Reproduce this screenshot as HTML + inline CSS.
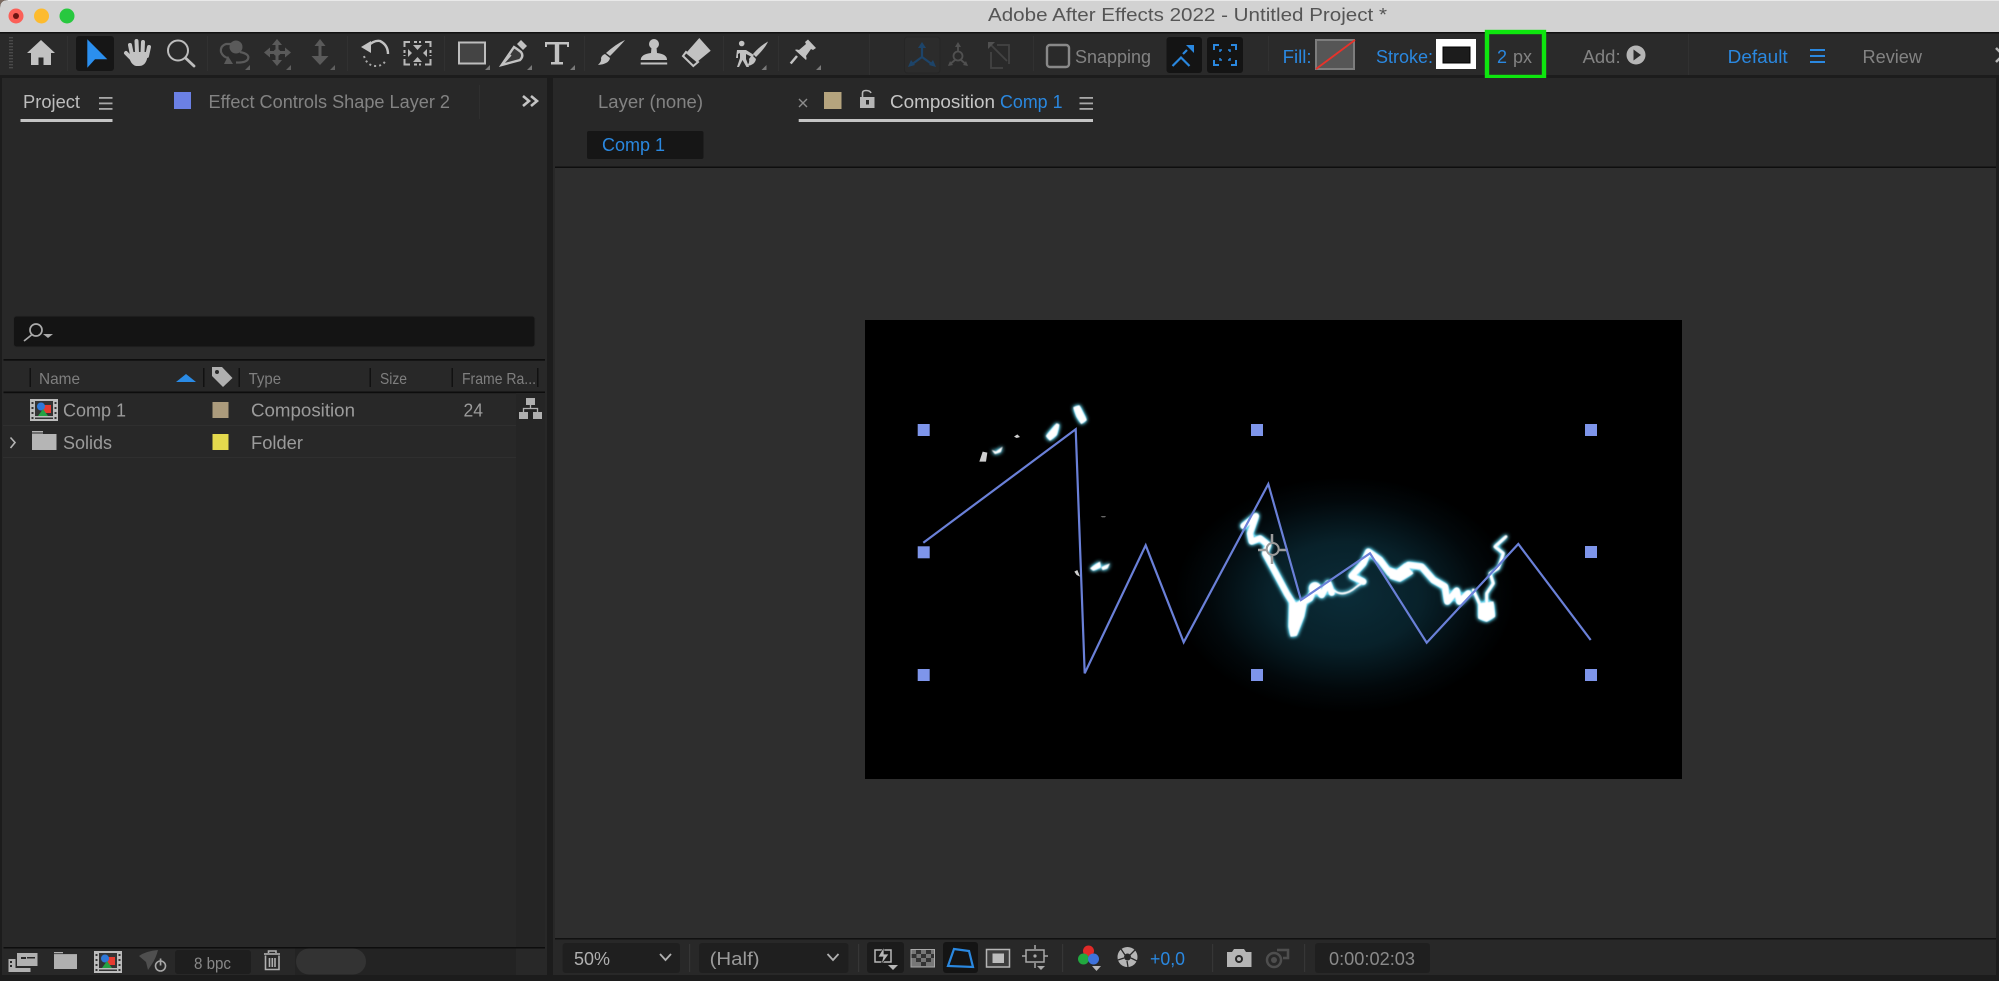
<!DOCTYPE html>
<html><head><meta charset="utf-8"><title>Adobe After Effects 2022 - Untitled Project *</title>
<style>
html,body{margin:0;padding:0;background:#1c1c1c;width:1999px;height:981px;overflow:hidden}
svg{display:block;filter:blur(.35px)}
text{font-family:"Liberation Sans",sans-serif;font-size:18.5px}
.g{fill:#838383}.l{fill:#bdbdbd}.b{fill:#2a88e0}.r{fill:#9b9b9b}.h{fill:#7f7f7f;font-size:16px}
</style></head><body>
<svg width="1999" height="981" viewBox="0 0 1999 981" xmlns="http://www.w3.org/2000/svg">
<defs>
<filter id="glow" x="-30%" y="-30%" width="160%" height="160%">
<feGaussianBlur in="SourceGraphic" stdDeviation="1.500" result="w"/>
<feGaussianBlur in="SourceAlpha" stdDeviation="6"/>
<feComponentTransfer result="a"><feFuncA type="linear" slope="2.2"/></feComponentTransfer>
<feFlood flood-color="#5fd3ec"/><feComposite in2="a" operator="in" result="c"/>
<feMerge><feMergeNode in="c"/><feMergeNode in="w"/></feMerge>
</filter>
<radialGradient id="halo"><stop offset="0" stop-color="#0b2c38"/><stop offset=".45" stop-color="#08212a"/><stop offset=".8" stop-color="#02080b"/><stop offset="1" stop-color="#000"/></radialGradient>
<g id="compicon">
<rect width="28" height="22" fill="#bcbcbc"/><rect x="5" y="2" width="18" height="18" fill="#333"/>
<g fill="#333"><rect x="1.500" y="3" width="2" height="2"/><rect x="1.500" y="8" width="2" height="2"/><rect x="1.500" y="13" width="2" height="2"/><rect x="1.500" y="18" width="2" height="2"/><rect x="24.500" y="3" width="2" height="2"/><rect x="24.500" y="8" width="2" height="2"/><rect x="24.500" y="13" width="2" height="2"/><rect x="24.500" y="18" width="2" height="2"/></g>
<rect x="13" y="6" width="8" height="8" fill="#e63a2f"/><circle cx="11" cy="7.500" r="4" fill="#2f78d8"/><path d="M8 17l5-7 5 7z" fill="#25a244"/><rect x="5" y="17" width="18" height="1.500" fill="#bcbcbc"/>
</g>
</defs>

<rect width="1999" height="981" fill="#1c1c1c"/>
<!-- title bar -->
<path d="M0 32V8Q0 0 8 0H1999V32Z" fill="#d2d2d2"/><rect x="8" y="0" width="1991" height="1" fill="#e9e9e9"/>
<path d="M0 0H8Q0 0 0 8Z" fill="#7a6a60"/>
<rect y="32" width="1999" height="1.500" fill="#111"/>
<circle cx="16" cy="16" r="7.500" fill="#fb5f57"/><circle cx="16" cy="16" r="3" fill="#6b1512"/>
<circle cx="41.500" cy="16" r="7.500" fill="#fdbb2e"/><circle cx="67" cy="16" r="7.500" fill="#28c83f"/>
<text x="988" y="21" style="fill:#555" textLength="399" lengthAdjust="spacingAndGlyphs">Adobe After Effects 2022 - Untitled Project *</text>

<!-- toolbar -->
<rect y="33.500" width="1999" height="41.500" fill="#2a2a2a"/>
<g fill="#4a4a4a"><rect x="9" y="37" width="4" height="1.400"/><rect x="9" y="40" width="4" height="1.400"/><rect x="9" y="43" width="4" height="1.400"/><rect x="9" y="46" width="4" height="1.400"/><rect x="9" y="49" width="4" height="1.400"/><rect x="9" y="52" width="4" height="1.400"/><rect x="9" y="55" width="4" height="1.400"/><rect x="9" y="58" width="4" height="1.400"/><rect x="9" y="61" width="4" height="1.400"/><rect x="9" y="64" width="4" height="1.400"/><rect x="9" y="67" width="4" height="1.400"/></g>
<g fill="#313131"><rect x="67" y="36" width="1" height="35"/><rect x="207" y="36" width="1" height="35"/><rect x="347" y="36" width="1" height="35"/><rect x="444" y="36" width="1" height="35"/><rect x="584" y="36" width="1" height="35"/><rect x="723" y="36" width="1" height="35"/><rect x="778" y="36" width="1" height="35"/><rect x="869" y="34" width="1" height="41"/><rect x="1033" y="36" width="1" height="35"/><rect x="1268" y="36" width="1" height="35"/><rect x="1688" y="34" width="1" height="41"/></g>

<path d="M41 40L27 53h4v12h7.500v-7.500h5V65H51V53h4z" fill="#c2c2c2"/>
<rect x="76" y="36" width="38" height="35" rx="3" fill="#161616"/>
<path d="M87.300 39.300L107.300 59.300H95L87.300 67.700z" fill="#2b8fef"/>
<!-- hand -->
<g stroke="#c2c2c2" stroke-width="4" stroke-linecap="round" fill="none"><path d="M132 55L130 45"/><path d="M137 53L136.500 41"/><path d="M142.500 53L143 42"/><path d="M147 56L149 47"/><path d="M133 60L126 53"/></g>
<path d="M130 52H148L147 59Q145 66 139 66H136Q132 65 130 60z" fill="#c2c2c2"/>
<!-- zoom -->
<circle cx="178" cy="50.500" r="10" fill="none" stroke="#bdbdbd" stroke-width="2"/><path d="M185.500 58L194 66" stroke="#bdbdbd" stroke-width="2.800" stroke-linecap="round"/>
<!-- rotate dim -->
<circle cx="236" cy="47" r="6.500" fill="#5a5a5a"/><path d="M232 44H226Q220 46 221 52Q223 57 228 58M240 52Q250 54 248 59Q246 63 236 62.500" fill="none" stroke="#5a5a5a" stroke-width="2.200"/><path d="M224 64L233 64L228 56z" fill="#5a5a5a"/>
<!-- move dim -->
<g fill="#5a5a5a"><path d="M277 39l-5 6h10zM277 66l-5-6h10zM264 52.500l6-5v10zM291 52.500l-6-5v10z"/><rect x="275.500" y="44" width="3" height="17"/><rect x="269" y="51" width="17" height="3"/><circle cx="277" cy="52.500" r="3.500"/></g>
<!-- vertical arrow dim -->
<g fill="#5a5a5a"><path d="M320 39l-5.500 7h11z"/><path d="M320 65l-8.500-9h17z"/><rect x="318.500" y="44" width="3" height="14"/></g>
<g fill="#5f5f5f"><path d="M250 65v5h-5zM291 65v5h-5zM335 65v5h-5z"/></g>
<!-- rotate -->
<path d="M368 46Q374 40 380 41Q388 45 388 54" fill="none" stroke="#c2c2c2" stroke-width="2.400"/><path d="M361 47L371 41L371 53z" fill="#c2c2c2"/>
<path d="M364 56Q367 66 376 66Q383 66 386 60" fill="none" stroke="#a8a8a8" stroke-width="2" stroke-dasharray="2 3"/>
<!-- unified camera -->
<g fill="none" stroke="#b8b8b8" stroke-width="2"><path d="M404.500 47V42H410M425 42H430.500V47M430.500 59V64.500H425M410 64.500H404.500V59"/><path d="M414 42H421M414 64.500H421M404.500 50V56M430.500 50V56" stroke-dasharray="3 2"/></g>
<g fill="#b8b8b8"><path d="M413 45h9l-4.500 5zM413 62h9l-4.500-5zM408 49v8l4-4zM427 49v8l-4-4z"/></g>
<!-- rect -->
<rect x="459" y="42.500" width="26" height="21" fill="#444" stroke="#bdbdbd" stroke-width="2"/>
<!-- pen -->
<path d="M514 47L501.700 65L520 60Q524 56 521 52L517 49z" fill="#3a3a3a" stroke="#c2c2c2" stroke-width="2.400"/><path d="M517 44L521 40L527 46L523 50z" fill="#c2c2c2"/><path d="M503 64L511 55" stroke="#c2c2c2" stroke-width="1.500"/>
<!-- T -->
<path d="M545 42V47H547V44.500H554.800V62H551V64.500H563V62H559.200V44.500H567V47H569V42z" fill="#c2c2c2"/>
<!-- corner tris -->
<g fill="#7a7a7a"><path d="M490 65v5h-5zM532 65v5h-5zM575 65v5h-5zM766.500 65v5h-5zM821 65v5h-5z"/></g>
<!-- brush -->
<path d="M625 40Q622 44 610 56L606 53Q616 44 625 40z" fill="#c2c2c2"/><path d="M605 54L610 58Q609 64 598 65Q602 61 601 58Q602 55 605 54z" fill="#c2c2c2"/>
<!-- stamp -->
<circle cx="654" cy="44" r="5" fill="#c2c2c2"/><path d="M651.500 47h5L657 53Q667 54 667 60H640.700Q641 54 651 53z" fill="#c2c2c2"/><rect x="640.700" y="62.500" width="26.500" height="2" fill="#c2c2c2"/>
<!-- eraser -->
<path d="M699.300 38L710.700 50.700L697 62L687 52z" fill="#c2c2c2"/><path d="M686 52L683 56L693.300 66L698 62z" fill="#2a2a2a" stroke="#c2c2c2" stroke-width="2"/>
<!-- puppet -->
<circle cx="741.700" cy="43.500" r="2.800" fill="#c2c2c2"/><path d="M737 50H746L754 55L752 57L746 54V59L749 67H746.500L742.500 60L739 67H737L740 58V53L738 54V58H736z" fill="#c2c2c2"/>
<path d="M768 41.500Q766 47 756 57L753 54Q760 46 768 41.500z" fill="#c2c2c2"/><path d="M752 55L756 59Q755 65 747 66Q750 62 749 59z" fill="#c2c2c2"/>
<!-- pin -->
<path d="M808 39.500L816 48L813 50L811 49L806 56Q807 59 806 60L795 50Q796 49 799 50L806 44L805 42z" fill="#c2c2c2"/><path d="M797 56L790.700 63.500" stroke="#c2c2c2" stroke-width="2.500"/>

<!-- axis -->
<rect x="904.500" y="37" width="35.500" height="36" rx="3" fill="#2c2c2c" stroke="#262626"/>
<g stroke="#1d4469" stroke-width="2.200" fill="none"><path d="M922 46V57L911 65M922 57L933 65"/></g>
<g fill="#1d4469"><path d="M922 42l-4 6h8zM908 67l3-7 4 5zM936 67l-3-7-4 5z"/></g>
<g stroke="#505050" stroke-width="1.800" fill="none"><circle cx="958" cy="56" r="4.500"/><path d="M958 47V52M955 60L949 65M961 60L967 65"/></g><g fill="#505050"><path d="M958 42l-3 5h6zM948 66l2-5 3 4zM968 66l-2-5-3 4z"/></g>
<g stroke="#434343" stroke-width="1.800" fill="none"><path d="M991 45L1007 61M991 52V68H1003M1009 64V45H997"/></g><path d="M988 42h7l-7 7z" fill="#505050"/>
<!-- snapping -->
<rect x="1047" y="45" width="22" height="22" rx="3" fill="#2a2a2a" stroke="#898989" stroke-width="2.400"/>
<text x="1075" y="63" class="g" textLength="76" lengthAdjust="spacingAndGlyphs">Snapping</text>
<rect x="1166.500" y="37" width="35.500" height="36" rx="3" fill="#141414"/>
<rect x="1207" y="37" width="36" height="36" rx="3" fill="#141414"/>
<path d="M1172.500 66L1181 57.500L1189.500 66" fill="none" stroke="#2a88e0" stroke-width="2.200"/>
<path d="M1183 54L1187 50" stroke="#2a88e0" stroke-width="2.200"/><path d="M1186 45H1194V53L1191 50z" fill="#2a88e0"/>
<g fill="none" stroke="#2a88e0" stroke-width="2"><path d="M1214 50V45H1219M1231 45H1236V50M1236 60V65H1231M1219 65H1214V60"/><path d="M1220 52V50H1222M1228 50H1230V52M1230 58V60H1228M1222 60H1220V58" stroke-width="1.500"/></g>

<!-- fill stroke -->
<text x="1282.600" y="63" class="b" textLength="29" lengthAdjust="spacingAndGlyphs">Fill:</text>
<rect x="1316" y="40" width="38" height="29" fill="#565656" stroke="#7d7d7d" stroke-width="2"/>
<path d="M1316 69L1355 40" stroke="#e8322a" stroke-width="1.800"/>
<text x="1376" y="63" class="b" textLength="57" lengthAdjust="spacingAndGlyphs">Stroke:</text>
<rect x="1436" y="39" width="40" height="30" fill="#fff"/><rect x="1443" y="47" width="27" height="16" fill="#1c1c1c" stroke="#000" stroke-width="1"/>
<rect x="1487" y="32" width="57" height="45" fill="none" stroke="#0ee60e" stroke-width="4.400"/>
<text x="1497" y="63" class="b" textLength="10" lengthAdjust="spacingAndGlyphs">2</text>
<text x="1513" y="63" class="g" textLength="19" lengthAdjust="spacingAndGlyphs">px</text>
<text x="1582.600" y="63" class="g" textLength="38" lengthAdjust="spacingAndGlyphs">Add:</text>
<circle cx="1636" cy="55" r="9.500" fill="#b5b5b5"/><path d="M1633.500 49.500L1641 55L1633.500 60.500z" fill="#2a2a2a"/>
<text x="1727.700" y="63" class="b" textLength="60" lengthAdjust="spacingAndGlyphs">Default</text>
<g fill="#2a88e0"><rect x="1810" y="49" width="15" height="2"/><rect x="1810" y="55" width="15" height="2"/><rect x="1810" y="61" width="15" height="2"/></g>
<text x="1862.500" y="63" class="g" textLength="59.500" lengthAdjust="spacingAndGlyphs">Review</text>
<path d="M1996 48L2003 55L1996 62" fill="none" stroke="#b5b5b5" stroke-width="2.500"/>

<!-- left panel -->
<rect x="2" y="78" width="545" height="897" fill="#282828"/>
<!-- right panel -->
<rect x="553" y="78" width="1443" height="897" fill="#282828"/>
<rect x="555" y="168" width="1441" height="770" fill="#2e2e2e"/>
<rect x="555" y="166.500" width="1441" height="1.500" fill="#0e0e0e"/>
<rect x="555" y="938" width="1441" height="1.500" fill="#111"/>

<!-- left tabs -->
<text x="23" y="108" class="l" textLength="57" lengthAdjust="spacingAndGlyphs">Project</text>
<g fill="#a8a8a8"><rect x="99" y="97" width="13.500" height="1.800"/><rect x="99" y="102.500" width="13.500" height="1.800"/><rect x="99" y="108" width="13.500" height="1.800"/></g>
<rect x="20.500" y="119" width="92" height="3" fill="#c4c4c4"/>
<rect x="174" y="92" width="17" height="17" fill="#6b80e4"/>
<text x="208.500" y="108" class="g" textLength="241.500" lengthAdjust="spacingAndGlyphs">Effect Controls Shape Layer 2</text>
<rect x="479" y="85" width="1" height="34" fill="#2f2f2f"/>
<path d="M523 96L529 101L523 106M531 96L537 101L531 106" fill="none" stroke="#c4c4c4" stroke-width="2.600"/>

<!-- search -->
<rect x="13.500" y="316" width="521.500" height="31" rx="3" fill="#141414" stroke="#262626"/>
<circle cx="36" cy="330" r="6" fill="none" stroke="#aaa" stroke-width="1.700"/><path d="M31.500 335L24 341" stroke="#aaa" stroke-width="1.700"/><path d="M43 334h10l-5 4z" fill="#aaa"/>

<!-- list -->
<rect x="3.500" y="359" width="541.500" height="1.700" fill="#0d0d0d"/>
<rect x="3.500" y="391.500" width="541.500" height="1.700" fill="#0d0d0d"/>
<g fill="#111"><rect x="29.500" y="368" width="1.500" height="19"/><rect x="203" y="368" width="1.500" height="19"/><rect x="238.500" y="368" width="1.500" height="19"/><rect x="369.500" y="368" width="1.500" height="19"/><rect x="451.500" y="368" width="1.500" height="19"/><rect x="537" y="368" width="1.500" height="19"/></g>
<text x="39" y="384" class="h" textLength="41" lengthAdjust="spacingAndGlyphs">Name</text>
<path d="M176 382L186 374L196 382z" fill="#2a8be6"/>
<path d="M212 367H222L232.500 378L223 387L212 376z" fill="#b0b0b0"/><circle cx="217" cy="372" r="2" fill="#282828"/>
<text x="248.600" y="384" class="h" textLength="32.500" lengthAdjust="spacingAndGlyphs">Type</text>
<text x="380" y="384" class="h" textLength="27" lengthAdjust="spacingAndGlyphs">Size</text>
<text x="462" y="384" class="h" textLength="74" lengthAdjust="spacingAndGlyphs">Frame Ra...</text>

<rect x="516" y="393" width="29" height="554" fill="#252525"/>
<rect x="3" y="425" width="513" height="1" fill="#2f2f2f"/><rect x="3" y="457" width="513" height="1" fill="#2f2f2f"/>
<use href="#compicon" x="30" y="399"/>
<text x="63" y="416.500" class="r" textLength="63" lengthAdjust="spacingAndGlyphs">Comp 1</text>
<rect x="212.500" y="402" width="16" height="16" fill="#ab9b7c"/>
<text x="251" y="416.500" class="r" textLength="104" lengthAdjust="spacingAndGlyphs">Composition</text>
<text x="463.500" y="416.500" class="r" textLength="19.500" lengthAdjust="spacingAndGlyphs">24</text>
<g fill="#b0b0b0"><rect x="526" y="398" width="9" height="7"/><rect x="519" y="412" width="9" height="7"/><rect x="533" y="412" width="9" height="7"/></g><path d="M530.500 405V408.500M523.500 412V408.500H537.500V412" fill="none" stroke="#b0b0b0" stroke-width="1.300"/>
<path d="M10.500 437.500L15 442.500L10.500 448" fill="none" stroke="#b5b5b5" stroke-width="1.600"/>
<path d="M32 431H43V434H56.500V450H32z" fill="#b5b5b5"/><rect x="32" y="432.500" width="24.500" height="1" fill="#282828"/>
<text x="63" y="449" class="r" textLength="49" lengthAdjust="spacingAndGlyphs">Solids</text>
<rect x="212.500" y="434" width="16" height="16" fill="#e4d94d"/>
<text x="251" y="449" class="r" textLength="52" lengthAdjust="spacingAndGlyphs">Folder</text>

<!-- left footer -->
<rect x="295" y="947" width="221" height="28" fill="#232323"/>
<rect x="3.500" y="947" width="541.500" height="1.500" fill="#0d0d0d"/>
<rect x="296" y="948.500" width="70" height="26" rx="13" fill="#333"/>
<!-- import icon -->
<rect x="17" y="953" width="20.500" height="13" fill="#b0b0b0"/><rect x="21" y="957" width="5" height="2" fill="#282828"/><rect x="27" y="957" width="8" height="1.500" fill="#282828"/>
<rect x="8.500" y="959" width="7" height="13" fill="#b0b0b0"/><rect x="8.500" y="968" width="22" height="4" fill="#b0b0b0"/><rect x="10" y="961" width="2" height="2" fill="#282828"/><rect x="10" y="965" width="2" height="2" fill="#282828"/>
<path d="M54 952H63V954H77V969H54z" fill="#b0b0b0"/><rect x="54" y="953.300" width="23" height=".8" fill="#282828"/>
<use href="#compicon" x="94" y="951"/>
<path d="M139 956Q146 951 158 950Q156 958 152 964L148 970L146 962z" fill="#4f4f4f"/>
<circle cx="160.500" cy="966" r="5" fill="none" stroke="#a8a8a8" stroke-width="1.600"/><rect x="159.700" y="958.500" width="1.700" height="7" fill="#a8a8a8"/>
<rect x="175" y="950" width="76" height="24" rx="3" fill="#1e1e1e"/>
<text x="194" y="969" style="fill:#888;font-size:17px" textLength="37" lengthAdjust="spacingAndGlyphs">8 bpc</text>
<g fill="none" stroke="#b0b0b0" stroke-width="1.600"><path d="M264 954H280"/><path d="M268.500 953V951H276V953"/><path d="M265.500 955.500V969.500H279V955.500"/><path d="M269.500 958V967M272.300 958V967M275 958V967"/></g>

<!-- layer tab -->
<text x="598" y="108" class="g" textLength="105" lengthAdjust="spacingAndGlyphs">Layer (none)</text>
<path d="M799 99L807 107M807 99L799 107" stroke="#8d8d8d" stroke-width="1.400"/>
<rect x="824" y="92" width="17.500" height="17" fill="#b5a47e"/>
<rect x="860" y="97" width="14.500" height="11" fill="#b5b5b5"/><path d="M862.500 97V93Q862.500 90.500 866 90.500Q870 90.500 871 93" fill="none" stroke="#b5b5b5" stroke-width="1.600"/><rect x="866" y="100" width="3" height="4.500" fill="#282828"/>
<text x="890" y="108" style="fill:#c6c6c6" textLength="105" lengthAdjust="spacingAndGlyphs">Composition</text>
<text x="1000" y="108" class="b" textLength="62.500" lengthAdjust="spacingAndGlyphs">Comp 1</text>
<g fill="#a8a8a8"><rect x="1079.500" y="97" width="13.500" height="1.800"/><rect x="1079.500" y="102.500" width="13.500" height="1.800"/><rect x="1079.500" y="108" width="13.500" height="1.800"/></g>
<rect x="798.700" y="119" width="294.300" height="3" fill="#c4c4c4"/>
<rect x="587" y="131" width="116.500" height="28" rx="2" fill="#161616"/>
<text x="602" y="151" class="b" textLength="63" lengthAdjust="spacingAndGlyphs">Comp 1</text>

<!-- canvas -->
<rect x="865" y="320" width="817" height="459" fill="#000"/>
<ellipse cx="1345" cy="595" rx="170" ry="118" fill="url(#halo)"/>
<g transform="translate(860 310) scale(.33333)" filter="url(#glow)">
<path d="M640 292L658 286L680 330L664 342L650 320z" fill="#fff"/>
<path d="M558 378L590 340L598 344L590 375L570 392z" fill="#fff"/>
<path d="M395 420L408 425L428 410L422 426L405 432z" fill="#fff"/>
<path d="M690 775L720 755L722 772L700 782z" fill="#fff"/><path d="M724 772L750 760L742 775L728 780z" fill="#fff"/>
</g>
<g transform="translate(860 310) scale(.33333)" fill="#cfcfcf">
<path d="M358 455L368 425L382 428L378 455z"/><path d="M462 380L472 373L480 381L470 384z"/><path d="M643 785L652 780L660 800L650 795z"/><path d="M722 618H738L735 622H726z" fill="#666"/>
</g>
<g transform="translate(1200 470) scale(.33333)" filter="url(#glow)" fill="#fff" stroke-linejoin="round" stroke-linecap="round">
<g fill="none" stroke="#fff">
<path d="M130 168L168 138L150 190L155 215L180 205L205 225L195 250L225 305L260 370L285 410" stroke-width="17"/>
<path d="M295 405L330 385L345 350L365 375L385 340L395 368" stroke-width="18"/>
<path d="M490 335L455 318L490 280L505 245L540 270L570 310L600 310L625 285L665 290L700 330L735 350L742 395L770 362L778 395L805 370" stroke-width="18"/>
<path d="M820 360L838 400M860 400L860 370L880 340L870 310L895 295L910 250L885 230L918 200" stroke-width="8"/>
<path d="M400 360Q430 385 470 350L490 335" stroke-width="5"/>
</g>
<path d="M268 395L320 400L312 440L290 497L272 500L266 470z"/>
<circle cx="345" cy="355" r="18"/>
<path d="M560 290L590 300L615 280L640 310L600 335L570 325z"/>
<path d="M835 400L880 395L885 440L860 455L835 445z"/>
</g>
<g fill="none" stroke="#9c9c9c" stroke-width="2"><circle cx="1272.700" cy="549" r="6"/><path d="M1258 550H1266M1279 550H1288M1272 534V542M1272 556V564" stroke-width="2.500"/></g>
<path d="M923.300 542.700L1075.700 429.300L1084.700 673.300L1145.700 545.300L1183.700 642.300L1268.300 484L1301 600L1370 553.300L1426.700 642.700L1518.300 544L1590.700 640" fill="none" stroke="#6a80d8" stroke-width="2.200" stroke-linejoin="miter"/>
<g fill="#7e95ea"><rect x="917.700" y="424" width="12" height="12"/><rect x="1251" y="424" width="12" height="12"/><rect x="1585" y="424" width="12" height="12"/><rect x="917.700" y="546.300" width="12" height="12"/><rect x="1585" y="546" width="12" height="12"/><rect x="917.700" y="669" width="12" height="12"/><rect x="1251" y="669" width="12" height="12"/><rect x="1585" y="669" width="12" height="12"/></g>

<!-- comp footer -->
<rect x="562.600" y="943" width="117.400" height="30" rx="3" fill="#1f1f1f"/>
<text x="574" y="965" style="fill:#b0b0b0" textLength="36" lengthAdjust="spacingAndGlyphs">50%</text>
<path d="M660 954L665.500 960L671 954" fill="none" stroke="#b0b0b0" stroke-width="1.800"/>
<rect x="689" y="944" width="1.200" height="28" fill="#363636"/>
<rect x="699" y="943" width="149.500" height="30" rx="3" fill="#1f1f1f"/>
<text x="709.600" y="965" style="fill:#9a9a9a" textLength="50" lengthAdjust="spacingAndGlyphs">(Half)</text>
<path d="M827.500 954L833 960L838.500 954" fill="none" stroke="#b0b0b0" stroke-width="1.800"/>
<rect x="858" y="944" width="1.200" height="28" fill="#363636"/>
<rect x="867" y="942" width="37" height="31" rx="3" fill="#1b1b1b"/>
<path d="M875 950H891V962H875z" fill="none" stroke="#b8b8b8" stroke-width="1.500"/><path d="M884 947L878 957H883L881 965L889 954H884z" fill="#b8b8b8" stroke="#1b1b1b" stroke-width=".7"/><path d="M888 965h10l-5 5z" fill="#b8b8b8"/>
<!-- checker -->
<rect x="911" y="949.500" width="23.500" height="17.500" fill="#777" stroke="#aaa"/><g fill="#333"><rect x="916" y="950" width="5" height="4"/><rect x="926" y="950" width="5" height="4"/><rect x="921" y="954" width="5" height="4"/><rect x="931" y="954" width="3" height="4"/><rect x="911.500" y="954" width="5" height="4"/><rect x="916" y="958" width="5" height="4"/><rect x="926" y="958" width="5" height="4"/><rect x="921" y="962" width="5" height="4"/></g>
<rect x="943" y="942" width="35" height="31" rx="3" fill="#141414"/>
<path d="M954 949L969 951L973 967L948 966z" fill="none" stroke="#2a88e0" stroke-width="2.200"/>
<rect x="986.500" y="949.500" width="23" height="17.500" fill="#3d3d3d" stroke="#b5b5b5" stroke-width="1.500"/><rect x="992.500" y="953.500" width="11.500" height="9.500" fill="#bcbcbc"/>
<!-- guide -->
<rect x="1026" y="950" width="18" height="12" fill="none" stroke="#a8a8a8" stroke-width="1.500"/><path d="M1035 945V949M1035 963V968M1022 956H1026M1044 956H1048" stroke="#a8a8a8" stroke-width="1.500"/><circle cx="1035" cy="956" r="1.600" fill="#a8a8a8"/><path d="M1037 966h8l-4 4z" fill="#a8a8a8"/>
<rect x="1062" y="944" width="1.200" height="28" fill="#363636"/>
<circle cx="1088.500" cy="951" r="5.500" fill="#e02a28"/><circle cx="1083.500" cy="959" r="5.500" fill="#21a83f"/><circle cx="1093.500" cy="959" r="5.500" fill="#3e72dc"/><path d="M1092 966h9l-4.500 5z" fill="#b8b8b8"/>
<!-- aperture -->
<circle cx="1127.500" cy="957" r="10" fill="#b5b5b5"/><circle cx="1127.500" cy="957" r="3.500" fill="#282828"/><path d="M1121 949L1125 955M1135 950L1130 955M1137 961L1131 958M1128 967L1127 961M1118 960L1124 958" stroke="#282828" stroke-width="1.300"/>
<text x="1150" y="965" class="b" textLength="35" lengthAdjust="spacingAndGlyphs">+0,0</text>
<rect x="1212" y="944" width="1.200" height="28" fill="#363636"/>
<path d="M1227 952H1232L1234 949H1244L1246 952H1251.500V967H1227z" fill="#b5b5b5"/><circle cx="1239" cy="959" r="4" fill="#282828"/><circle cx="1239" cy="959" r="2" fill="#b5b5b5"/>
<circle cx="1274" cy="960" r="7" fill="none" stroke="#4e4e4e" stroke-width="2.500"/><circle cx="1274" cy="960" r="3" fill="#4e4e4e"/><path d="M1277 950H1288V958H1283" fill="none" stroke="#4e4e4e" stroke-width="2.500"/>
<rect x="1304" y="944" width="1.200" height="28" fill="#363636"/>
<rect x="1315" y="943" width="115" height="30" rx="3" fill="#1f1f1f"/>
<text x="1329" y="965" style="fill:#8a8a8a" textLength="86" lengthAdjust="spacingAndGlyphs">0:00:02:03</text>
</svg>
</body></html>
